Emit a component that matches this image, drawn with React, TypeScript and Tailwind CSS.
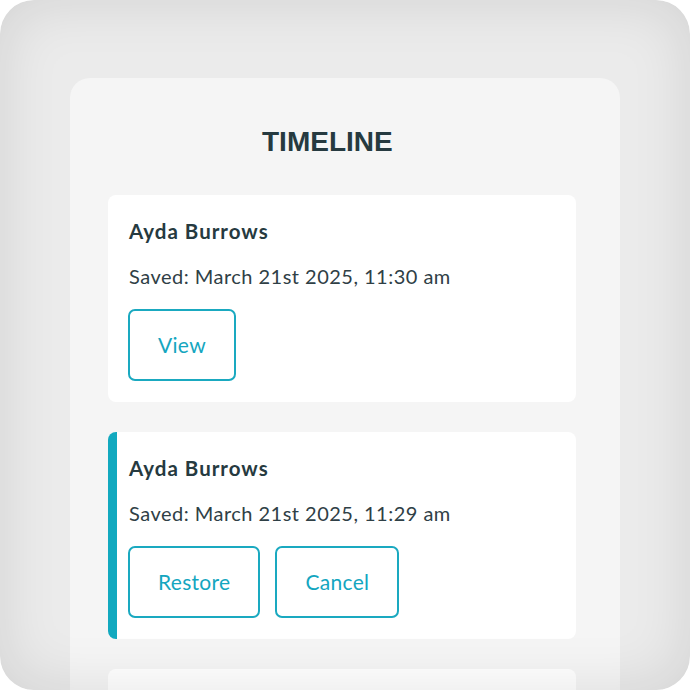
import React from 'react';

type Entry = {
  name: string;
  saved: string;
  active?: boolean;
  actions: string[];
};

const ENTRIES: Entry[] = [
  { name: 'Ayda Burrows', saved: 'Saved: March 21st 2025, 11:30 am', actions: ['View'] },
  { name: 'Ayda Burrows', saved: 'Saved: March 21st 2025, 11:29 am', active: true, actions: ['Restore', 'Cancel'] },
];

const TimelineCard: React.FC<{ entry: Entry }> = ({ entry }) => (
  <div
    className={`bg-white rounded-[8px] pt-[24px] pb-[21px] ${
      entry.active ? 'border-l-[9px] border-[#12a9bf] pl-[11px]' : 'pl-[20px]'
    }`}
  >
    <p className="pl-[1px] text-[20.5px] leading-[24px] font-bold tracking-[1px] text-[#263a40]">{entry.name}</p>
    <p className="pl-[1px] mt-[21px] text-[20px] leading-[24px] tracking-[0.48px] text-[#2f4046]">{entry.saved}</p>
    <div className="mt-[21px] flex gap-[15px]">
      {entry.actions.map((label) => (
        <button
          key={label}
          className="h-[72px] px-[28px] rounded-[7px] border-2 border-[#1aa9c0] text-[21px] tracking-[0.3px] text-[#14a6bf] bg-white"
        >
          {label}
        </button>
      ))}
    </div>
  </div>
);

export default function App() {
  return (
    <div className="w-[690px] h-[690px] bg-white" style={{ fontFamily: 'Lato, "Open Sans", sans-serif' }}>
      <div className="relative w-full h-full rounded-[34px] bg-[#ebebeb] overflow-hidden pt-[78px] px-[70px]">
        <div className="h-[700px] bg-[#f5f5f5] rounded-t-[20px] pl-[38px] pr-[44px]">
          <h1
            className="pt-[48px] mb-[37px] pl-[154px] text-[28px] leading-[32px] font-bold text-[#263a40]"
            style={{ fontFamily: '"Liberation Sans", Arial, sans-serif' }}
          >
            TIMELINE
          </h1>
          <div className="flex flex-col gap-[30px]">
            {ENTRIES.map((e, i) => (
              <TimelineCard key={i} entry={e} />
            ))}
            <div className="h-[200px] bg-white rounded-[8px]" />
          </div>
        </div>
        {/* vignette over the whole frame */}
        <div className="pointer-events-none absolute inset-0 rounded-[34px] shadow-[inset_0_0_60px_rgba(0,0,0,0.11)]" />
      </div>
    </div>
  );
}
